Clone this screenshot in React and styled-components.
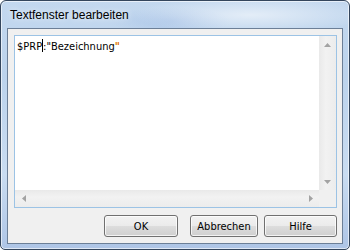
import styled, { createGlobalStyle } from 'styled-components';

const GlobalStyle = createGlobalStyle`
  body {
    margin: 0;
    overflow: hidden;
    background: #ffffff;
  }
`;

const Window = styled.div`
  width: 350px;
  height: 250px;
  box-sizing: border-box;
  border: 1px solid #34465d;
  border-radius: 6px 6px 5px 5px;
  display: flex;
  flex-direction: column;
  background:
    radial-gradient(ellipse 120px 18px at 250px 14px, rgba(255, 255, 255, 0.55), rgba(255, 255, 255, 0)),
    radial-gradient(ellipse 60px 14px at 170px 20px, rgba(150, 180, 225, 0.45), rgba(150, 180, 225, 0)),
    linear-gradient(to bottom, #c3d8ef 0%, #bcd3ec 30%, #c9dcf1 70%, #aec5e6 100%);
  box-shadow: inset 0 0 0 1px rgba(255, 255, 255, 0.6);
  font-family: "Liberation Sans", Arial, sans-serif;
`;

const TitleBar = styled.div`
  height: 27px;
  padding-left: 9px;
  display: flex;
  align-items: center;
  font-size: 12px;
  color: #000000;
  text-shadow: 0 0 6px rgba(255, 255, 255, 0.9);
`;

const Client = styled.div`
  flex: 1;
  margin: 0 6px 5px 6px;
  border: 1px solid #6c7f97;
  background: #f0f0f0;
  padding: 6px 5px 6px 6px;
  display: flex;
  flex-direction: column;
`;

const Editor = styled.div`
  flex: 1;
  border: 1px solid #9cc3e5;
  background: #ffffff;
  display: grid;
  grid-template-columns: 1fr 17px;
  grid-template-rows: 1fr 17px;
  min-height: 0;
`;

const TextPane = styled.div`
  padding: 3px 2px;
  font-family: "DejaVu Sans Condensed", "DejaVu Sans", sans-serif;
  font-stretch: condensed;
  font-size: 11px;
  line-height: 14px;
  color: #000000;
  white-space: pre;
`;

const Caret = styled.span`
  display: inline-block;
  width: 1px;
  height: 13px;
  background: #000000;
  vertical-align: -2px;
`;

const Quote = styled.span`
  color: #e07000;
  font-weight: bold;
`;

const ScrollTrack = styled.div`
  background: ${(p) =>
    p.$vertical
      ? 'linear-gradient(to right, #e9e9e9, #f2f2f2 40%, #ececec)'
      : 'linear-gradient(to bottom, #e9e9e9, #f2f2f2 40%, #ececec)'};
  display: flex;
  flex-direction: ${(p) => (p.$vertical ? 'column' : 'row')};
  justify-content: space-between;
  align-items: center;
`;

const ArrowBox = styled.div`
  width: 17px;
  height: 17px;
  display: flex;
  align-items: center;
  justify-content: center;
`;

const Corner = styled.div`
  background: #f0f0f0;
`;

const ButtonRow = styled.div`
  margin-top: 7px;
  height: 22px;
  display: flex;
  justify-content: flex-end;
`;

const Button = styled.button`
  width: ${(p) => p.$width}px;
  margin-left: ${(p) => p.$gap || 0}px;
  height: 22px;
  box-sizing: border-box;
  border: 1px solid #707070;
  border-radius: 3px;
  padding: 0;
  background: linear-gradient(to bottom, #f2f2f2 0%, #ebebeb 49%, #dddddd 50%, #cfcfcf 100%);
  box-shadow: inset 0 0 0 1px rgba(255, 255, 255, 0.75);
  font-family: "DejaVu Sans Condensed", "DejaVu Sans", sans-serif;
  font-stretch: condensed;
  font-size: 11px;
  color: #000000;
`;

const Arrow = ({ dir }) => {
  const points = {
    up: '0,4 3.5,0 7,4',
    down: '0,0 3.5,4 7,0',
    left: '4,0 0,3.5 4,7',
    right: '0,0 4,3.5 0,7',
  }[dir];
  const horizontal = dir === 'left' || dir === 'right';
  return (
    <svg width={horizontal ? 4 : 7} height={horizontal ? 7 : 4} viewBox={horizontal ? '0 0 4 7' : '0 0 7 4'}>
      <polygon points={points} fill="#a3a3a3" />
    </svg>
  );
};

export default function App() {
  return (
    <>
      <GlobalStyle />
      <Window>
        <TitleBar>Textfenster bearbeiten</TitleBar>
        <Client>
          <Editor>
            <TextPane>
              $PRP<Caret />:"Bezeichnung<Quote>"</Quote>
            </TextPane>
            <ScrollTrack $vertical>
              <ArrowBox>
                <Arrow dir="up" />
              </ArrowBox>
              <ArrowBox>
                <Arrow dir="down" />
              </ArrowBox>
            </ScrollTrack>
            <ScrollTrack>
              <ArrowBox>
                <Arrow dir="left" />
              </ArrowBox>
              <ArrowBox>
                <Arrow dir="right" />
              </ArrowBox>
            </ScrollTrack>
            <Corner />
          </Editor>
          <ButtonRow>
            <Button $width={74}>OK</Button>
            <Button $width={68} $gap={12}>Abbrechen</Button>
            <Button $width={73} $gap={6}>Hilfe</Button>
          </ButtonRow>
        </Client>
      </Window>
    </>
  );
}
